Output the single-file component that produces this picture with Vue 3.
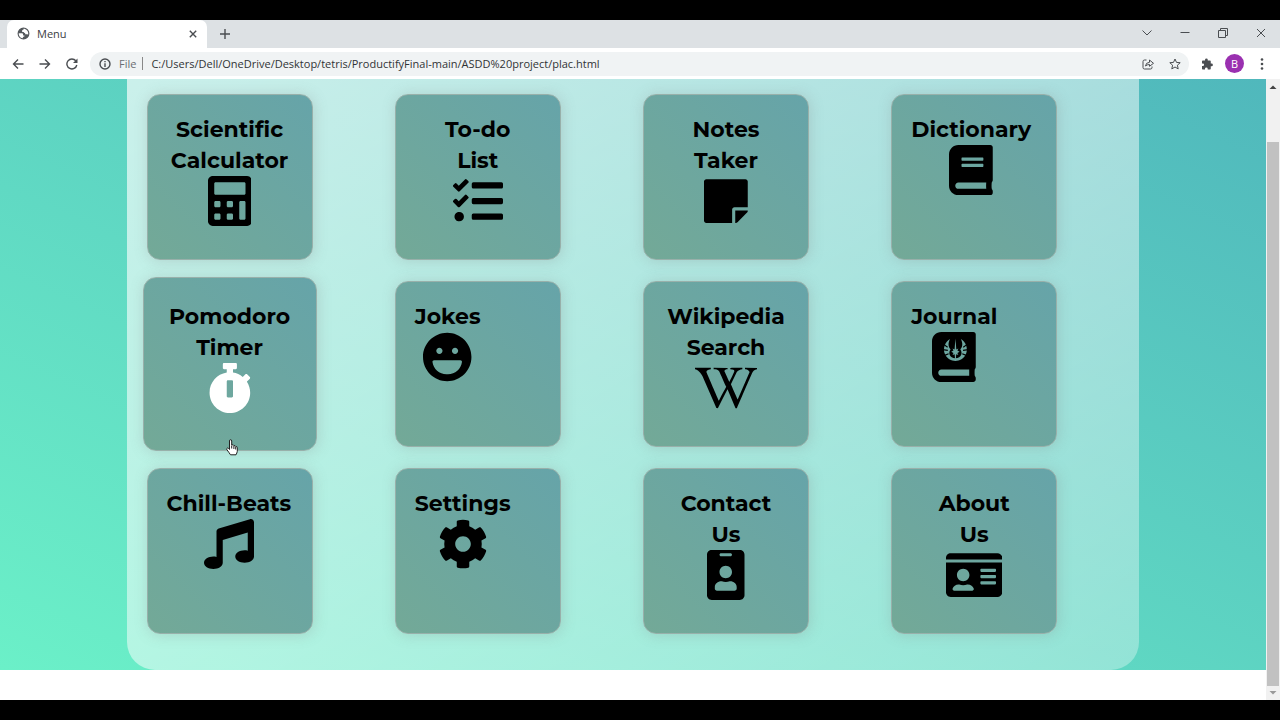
<template>
    <div class="screen">
        <header class="browser">
            <div class="tab-strip">
                <div class="tab">
                    <svg class="globe" viewBox="0 0 24 24"><path fill-rule="evenodd" d="M12 1a11 11 0 1 0 0 22 11 11 0 0 0 0-22zM10.500 20.800C5.500 20 2.800 16 3.200 11.500h5c2 0 3 1 3 2.500v1.500h2.500v2c-1.800 0-3 1-3.200 3.300zM20.500 14.500c-.800-.800-1.500-1-2.500-1h-3v-2.500c-1.500 0-2.500-.500-2.500-2H9.500V7c0-1.500 1-2 2.500-2V3.200c5 0 10 4.500 8.500 11.300z" /></svg>
                    <span class="tab-title">Menu</span>
                    <button class="icon-btn" aria-label="Close tab">
                        <svg class="tiny" viewBox="0 0 8 8"><path class="line thick" d="M.800.800l6.400 6.400M7.200.800L.800 7.200" /></svg>
                    </button>
                </div>
                <button class="icon-btn new-tab" aria-label="New tab">
                    <svg class="small" viewBox="0 0 10 10"><path class="line thick" d="M5 0v10M0 5h10" /></svg>
                </button>
                <div class="window-btns">
                    <button class="icon-btn" aria-label="Search tabs"><svg class="small" viewBox="0 0 10 10"><path class="line" d="M.5 2.500L5 7 9.500 2.500" /></svg></button>
                    <button class="icon-btn" aria-label="Minimize"><svg class="small" viewBox="0 0 10 10"><path class="line" d="M.5 4.500h9" /></svg></button>
                    <button class="icon-btn" aria-label="Restore"><svg class="small" viewBox="0 0 10 10"><path class="line" d="M.5 2.500h7v7h-7zM2.500 2.500v-2h7v7h-2" /></svg></button>
                    <button class="icon-btn" aria-label="Close"><svg class="small" viewBox="0 0 10 10"><path class="line" d="M1 1l8 8M9 1L1 9" /></svg></button>
                </div>
            </div>
            <div class="toolbar">
                <button class="icon-btn" aria-label="Back"><svg class="nav" viewBox="0 0 12 12"><path class="line thick" d="M11.500 6H1.500M6 1.500L1.500 6 6 10.500" /></svg></button>
                <button class="icon-btn" aria-label="Forward"><svg class="nav" viewBox="0 0 12 12"><path class="line thick" d="M.5 6h10M6 1.500L10.500 6 6 10.500" /></svg></button>
                <button class="icon-btn" aria-label="Reload"><svg class="nav" viewBox="0 0 12 12"><path class="line thick" d="M10.800 7A5 5 0 1 1 9.800 2.800" /><path d="M11.500.500v4.500H7z" /></svg></button>
                <div class="address">
                    <svg class="nav" viewBox="0 0 12 12"><circle class="line thick" cx="6" cy="6" r="5" /><path class="line thick" d="M6 5.300V9M6 3v1.300" /></svg>
                    <span class="scheme">File</span>
                    <input class="url" type="text" aria-label="Address" v-model="url">
                    <button class="icon-btn" aria-label="Share"><svg class="nav" viewBox="0 0 12 12"><path class="line" d="M4.500 2H2.500Q1 2 1 3.500v6Q1 11 2.500 11h6q1.500 0 1.500-1.500V8.500M3.500 8Q3.800 4.500 7.500 4.300V2L11.500 5.300 7.500 8.300V6.500Q5 6.500 3.500 8z" /></svg></button>
                    <button class="icon-btn" aria-label="Bookmark"><svg class="nav" viewBox="0 0 12 12"><path class="line" d="M6 1l1.500 3.400 3.700.300-2.800 2.500.800 3.700L6 9l-3.200 1.900.800-3.700L.800 4.700l3.700-.300z" /></svg></button>
                </div>
                <button class="icon-btn" aria-label="Extensions"><svg class="nav" viewBox="0 0 24 24"><path d="M21 11h-1.500V7c0-1.100-.900-2-2-2h-4V3.500a2.700 2.700 0 0 0-5.400 0V5H4c-1.100 0-2 .900-2 2v3.800h1.500a2.700 2.700 0 0 1 0 5.400H2V21c0 1.100.900 2 2 2h4v-1.500a2.700 2.700 0 0 1 5.400 0V23h4.100c1.100 0 2-.900 2-2v-4.500H21A2.700 2.700 0 0 0 21 11z" /></svg></button>
                <button class="avatar">B</button>
                <button class="icon-btn" aria-label="More"><svg class="nav" viewBox="0 0 12 12"><circle cx="6" cy="1.500" r="1.300" /><circle cx="6" cy="6" r="1.300" /><circle cx="6" cy="10.500" r="1.300" /></svg></button>
            </div>
        </header>
        <div class="viewport">
            <div class="page">
                <main>
                    <section class="glass">
                        <div class="card" v-for="item in menuList" :key="item.icon" :class="{ active: item.active }">
                            <a href="#" :class="{ wide: item.lines.length > 1 }" @click.prevent>
                                <h2><span v-for="line in item.lines" :key="line">{{ line }}</span></h2>
                                <svg class="icon" :viewBox="`0 0 ${item.width} 512`">
                                    <path :d="icons[item.icon]" />
                                    <g v-if="item.icon === 'journal'" class="emblem">
                                        <path d="M184 72C134 100 108 170 132 226c20 48 66 71 108 71s88-23 108-71c24-56-2-126-52-154 20 40 20 78-6 106 26 36 12 84-50 92-62-8-76-56-50-92-26-28-26-66-6-106z" />
                                        <path class="slit" d="M116 124l44 32M108 180l54 8M124 242l46-20M364 124l-44 32M372 180l-54 8M356 242l-46-20" />
                                        <path d="M240 66l9 112 21-8-10 20 23 12-23 12 10 22-22-8-4 50h-8l-4-50-22 8 10-22-23-12 23-12-10-20 21 8z" />
                                    </g>
                                </svg>
                            </a>
                            <svg v-if="item.active" class="pointer" viewBox="0 0 12 17"><path d="M3.500 10V2Q3.500.700 4.600.700T5.700 2v4Q7.500 5.200 7.900 6.700 9.300 6.200 9.700 7.500q1.600-.300 1.600 1.300v3.500Q11 14 10 15.800H4.500Q3 13.500.900 10.700.300 9.500 1.500 9q1 0 2 1.500zM5.700 6.500v3M7.900 7v3M9.700 8v2.500" /></svg>
                        </div>
                    </section>
                </main>
            </div>
            <div class="scrollbar">
                <svg viewBox="0 0 14 16"><path d="M3.500 10L7 6.500 10.500 10z" /></svg>
                <div class="track"><div class="thumb"></div></div>
                <svg class="muted" viewBox="0 0 14 14"><path d="M3.500 5L7 8.500 10.500 5z" /></svg>
            </div>
        </div>
    </div>
</template>
<script setup>
import { ref } from 'vue'
const url = ref('C:/Users/Dell/OneDrive/Desktop/tetris/ProductifyFinal-main/ASDD%20project/plac.html')
const menuList = ref([
    {lines: ["Scientific", "Calculator"], icon: "calculator", width: 448},
    {lines: ["To-do", "List"], icon: "tasks", width: 512},
    {lines: ["Notes", "Taker"], icon: "note", width: 448},
    {lines: ["Dictionary"], icon: "book", width: 448},
    {lines: ["Pomodoro", "Timer"], icon: "stopwatch", width: 448, active: true},
    {lines: ["Jokes"], icon: "laugh", width: 496},
    {lines: ["Wikipedia", "Search"], icon: "wikipedia", width: 640},
    {lines: ["Journal"], icon: "journal", width: 448},
    {lines: ["Chill-Beats"], icon: "music", width: 512},
    {lines: ["Settings"], icon: "cog", width: 512},
    {lines: ["Contact", "Us"], icon: "badge", width: 384},
    {lines: ["About", "Us"], icon: "idCard", width: 576},
])
const icons = {
    calculator: "M400 0H48C22.4 0 0 22.4 0 48v416c0 25.6 22.4 48 48 48h352c25.6 0 48-22.4 48-48V48c0-25.6-22.4-48-48-48zM128 435.2c0 6.4-6.4 12.8-12.8 12.8H76.8c-6.4 0-12.8-6.4-12.8-12.8v-38.4c0-6.4 6.4-12.8 12.8-12.8h38.4c6.4 0 12.8 6.4 12.8 12.8v38.4zm0-128c0 6.4-6.4 12.8-12.8 12.8H76.8c-6.4 0-12.8-6.4-12.8-12.8v-38.4c0-6.4 6.4-12.8 12.8-12.8h38.4c6.4 0 12.8 6.4 12.8 12.8v38.4zm128 128c0 6.4-6.4 12.8-12.8 12.8h-38.4c-6.4 0-12.8-6.4-12.8-12.8v-38.4c0-6.4 6.4-12.8 12.8-12.8h38.4c6.4 0 12.8 6.4 12.8 12.8v38.4zm0-128c0 6.4-6.4 12.8-12.8 12.8h-38.4c-6.4 0-12.8-6.4-12.8-12.8v-38.4c0-6.4 6.4-12.8 12.8-12.8h38.4c6.4 0 12.8 6.4 12.8 12.8v38.4zm128 128c0 6.4-6.4 12.8-12.8 12.8h-38.4c-6.4 0-12.8-6.4-12.8-12.8V268.8c0-6.4 6.4-12.8 12.8-12.8h38.4c6.4 0 12.8 6.4 12.8 12.8v166.400zm0-256c0 6.4-6.4 12.8-12.8 12.8H76.8c-6.4 0-12.8-6.4-12.8-12.8V76.8C64 70.4 70.4 64 76.8 64h294.4c6.4 0 12.8 6.4 12.8 12.8v102.400z",
    tasks: "M139.61 35.5a12 12 0 0 0-17 0L58.93 98.81l-22.7-22.12a12 12 0 0 0-17 0L3.53 92.41a12 12 0 0 0 0 17l47.59 47.4a12.78 12.78 0 0 0 17.61 0l15.59-15.62L156.52 69a12.09 12.09 0 0 0 .09-17zm0 159.19a12 12 0 0 0-17 0l-63.68 63.72-22.7-22.1a12 12 0 0 0-17 0L3.53 252a12 12 0 0 0 0 17L51 316.5a12.77 12.77 0 0 0 17.6 0l15.7-15.69 72.2-72.22a12 12 0 0 0 .09-16.9zM64 368c-26.49 0-48.59 21.5-48.59 48S37.53 464 64 464a48 48 0 0 0 0-96zm432 16H208a16 16 0 0 0-16 16v32a16 16 0 0 0 16 16h288a16 16 0 0 0 16-16v-32a16 16 0 0 0-16-16zm0-320H208a16 16 0 0 0-16 16v32a16 16 0 0 0 16 16h288a16 16 0 0 0 16-16V80a16 16 0 0 0-16-16zm0 160H208a16 16 0 0 0-16 16v32a16 16 0 0 0 16 16h288a16 16 0 0 0 16-16v-32a16 16 0 0 0-16-16z",
    note: "M312 320h136V56c0-13.3-10.7-24-24-24H24C10.7 32 0 42.7 0 56v400c0 13.3 10.7 24 24 24h264V344c0-13.2 10.8-24 24-24zm129 55l-98 98c-4.5 4.5-10.6 7-17 7h-6V352h128v6.1c0 6.3-2.5 12.4-7 16.9z",
    book: "M448 360V24c0-13.3-10.7-24-24-24H96C43 0 0 43 0 96v320c0 53 43 96 96 96h328c13.3 0 24-10.7 24-24v-16c0-7.5-3.5-14.3-8.9-18.7-4.2-15.4-4.2-59.3 0-74.7 5.4-4.3 8.9-11.1 8.9-18.6zM128 134c0-3.3 2.7-6 6-6h212c3.3 0 6 2.7 6 6v20c0 3.3-2.7 6-6 6H134c-3.3 0-6-2.7-6-6v-20zm0 64c0-3.3 2.7-6 6-6h212c3.3 0 6 2.7 6 6v20c0 3.3-2.7 6-6 6H134c-3.3 0-6-2.7-6-6v-20zm253.4 250H96c-17.7 0-32-14.3-32-32 0-17.6 14.4-32 32-32h285.400c-1.9 17.1-1.9 46.9 0 64z",
    stopwatch: "M432 304c0 114.9-93.1 208-208 208S16 418.9 16 304c0-104 76.3-190.2 176-205.5V64h-28c-6.6 0-12-5.4-12-12V12c0-6.6 5.4-12 12-12h120c6.6 0 12 5.4 12 12v40c0 6.6-5.4 12-12 12h-28v34.5c37.5 5.8 71.7 21.6 99.7 44.6l27.5-27.5c4.7-4.7 12.3-4.7 17 0l28.3 28.3c4.7 4.7 4.7 12.3 0 17l-29.4 29.4-.6.6C419.7 223.3 432 262.2 432 304zm-176 36V188.5c0-6.6-5.4-12-12-12h-40c-6.6 0-12 5.4-12 12V340c0 6.6 5.4 12 12 12h40c6.6 0 12-5.4 12-12z",
    laugh: "M248 8C111 8 0 119 0 256s111 248 248 248 248-111 248-248S385 8 248 8zm80 152c17.7 0 32 14.3 32 32s-14.3 32-32 32-32-14.3-32-32 14.3-32 32-32zm-160 0c17.7 0 32 14.3 32 32s-14.3 32-32 32-32-14.3-32-32 14.3-32 32-32zm88 272h-16c-73.4 0-134-55-142.9-126-1.2-9.5 6.3-18 15.9-18h270c9.6 0 17.1 8.4 15.9 18-8.9 71-69.5 126-142.900 126z",
    wikipedia: "M640 51.2l-.3 12.2c-28.1.8-45 15.8-55.8 40.3-25 57.8-103.3 240-155.3 358.6H415l-81.9-193.1c-32.5 63.6-68.3 130-99.2 193.1-.3.3-15 0-15-.3C172 352.3 122.8 243.4 75.8 133.4 64.4 106.7 26.4 63.4.2 63.7c0-3.1-.3-10-.3-14.2h161.9v13.9c-19.2 1.1-52.8 13.3-43.3 34.2 21.9 49.7 103.6 240.3 125.6 288.6 15-29.7 57.8-109.2 75.3-142.8-13.9-28.3-58.6-133.9-72.8-160-9.7-17.8-36.1-19.4-55.8-19.7V49.8l142.5.3v13.1c-19.4.6-38.1 7.8-29.4 26.1 18.9 40 30.6 68.1 48.1 104.7 5.6-10.8 34.7-69.4 48.1-100.8 8.9-20.6-3.9-28.6-38.6-29.4.3-3.6 0-10.3.3-13.6 44.4-.3 111.1-.3 123.1-.6v13.6c-22.5.8-45.8 12.8-58.1 31.7l-59.2 122.8c6.4 16.1 63.3 142.8 69.2 156.7L559.2 91.8c-8.6-23.1-36.4-28.1-47.2-28.3V49.6l127.8 1.1.2.5z",
    journal: "M448 358.4V25.6c0-16-9.6-25.6-25.6-25.6H96C41.6 0 0 41.6 0 96v320c0 54.4 41.6 96 96 96h326.4c12.8 0 25.6-9.6 25.6-25.6v-16c0-6.4-3.2-12.8-9.6-19.2-3.2-16-3.2-60.8 0-73.6 6.4-3.2 9.6-9.6 9.6-19.2zM381 448H96c-18 0-32-14-32-32s14-32 32-32h285z",
    music: "M511.99 32.01c0-21.71-21.1-37.01-41.6-30.51L150.4 96c-13.3 4.2-22.4 16.5-22.4 30.5v261.42c-10.05-2.38-20.72-3.92-32-3.92-53.02 0-96 28.65-96 64s42.98 64 96 64 96-28.65 96-64V214.31l256-75.02v184.63c-10.05-2.38-20.72-3.92-32-3.92-53.02 0-96 28.65-96 64s42.98 64 96 64 96-28.65 96-64l-.01-351.99z",
    cog: "M487.4 315.7l-42.6-24.6c4.3-23.2 4.3-47 0-70.2l42.6-24.6c4.9-2.8 7.1-8.6 5.5-14-11.1-35.6-30-67.8-54.7-94.6-3.8-4.1-10-5.1-14.8-2.3L380.8 110c-17.9-15.4-38.5-27.3-60.8-35.1V25.8c0-5.6-3.9-10.5-9.4-11.7-36.7-8.2-74.3-7.8-109.2 0-5.5 1.2-9.4 6.1-9.4 11.7V75c-22.2 7.9-42.8 19.8-60.8 35.1L88.7 85.5c-4.9-2.8-11-1.9-14.8 2.3-24.7 26.7-43.6 58.9-54.7 94.6-1.7 5.4.6 11.2 5.5 14L67.3 221c-4.3 23.2-4.3 47 0 70.2l-42.6 24.6c-4.9 2.8-7.1 8.6-5.5 14 11.1 35.6 30 67.8 54.7 94.6 3.8 4.1 10 5.1 14.8 2.3l42.6-24.6c17.9 15.4 38.5 27.3 60.8 35.1v49.2c0 5.6 3.9 10.5 9.4 11.7 36.7 8.2 74.3 7.8 109.2 0 5.5-1.2 9.4-6.1 9.4-11.7v-49.2c22.2-7.9 42.8-19.8 60.8-35.1l42.6 24.6c4.9 2.8 11 1.9 14.8-2.3 24.7-26.7 43.6-58.9 54.7-94.6 1.5-5.5-.7-11.3-5.6-14.1zM256 336c-44.1 0-80-35.9-80-80s35.9-80 80-80 80 35.9 80 80-35.9 80-80 80z",
    badge: "M336 0H48C21.5 0 0 21.5 0 48v416c0 26.5 21.5 48 48 48h288c26.5 0 48-21.5 48-48V48c0-26.5-21.5-48-48-48zM144 32h96c8.8 0 16 7.2 16 16s-7.2 16-16 16h-96c-8.8 0-16-7.2-16-16s7.2-16 16-16zm48 128c35.3 0 64 28.7 64 64s-28.7 64-64 64-64-28.7-64-64 28.7-64 64-64zm112 236.8c0 10.6-10 19.2-22.4 19.2H102.4C90 416 80 407.4 80 396.8v-19.2c0-31.8 30.1-57.6 67.2-57.6h5c12.3 5.1 25.7 8 39.8 8s27.6-2.9 39.8-8h5c37.1 0 67.2 25.8 67.2 57.6v19.2z",
    idCard: "M528 32H48C21.5 32 0 53.5 0 80v16h576V80c0-26.5-21.5-48-48-48zM0 432c0 26.5 21.5 48 48 48h480c26.5 0 48-21.5 48-48V128H0v304zm352-232c0-4.4 3.6-8 8-8h144c4.4 0 8 3.6 8 8v16c0 4.4-3.6 8-8 8H360c-4.4 0-8-3.6-8-8v-16zm0 64c0-4.4 3.6-8 8-8h144c4.4 0 8 3.6 8 8v16c0 4.4-3.6 8-8 8H360c-4.4 0-8-3.6-8-8v-16zm0 64c0-4.4 3.6-8 8-8h144c4.4 0 8 3.6 8 8v16c0 4.4-3.6 8-8 8H360c-4.4 0-8-3.6-8-8v-16zM176 192c35.3 0 64 28.7 64 64s-28.7 64-64 64-64-28.7-64-64 28.7-64 64-64zM67.1 396.2C75.5 370.5 99.6 352 128 352h8.200c12.3 5.1 25.7 8 39.8 8s27.6-2.9 39.8-8h8.200c28.4 0 52.5 18.5 60.9 44.2 3.2 9.9-5.2 19.8-15.6 19.8H82.7c-10.4 0-18.8-10-15.6-19.8z",
}
</script>
<style>
body {
    margin: 0;
    background: #000;
}
</style>
<style scoped>
* {
    box-sizing: border-box;
}
.screen {
    display: flex;
    flex-direction: column;
    min-height: 100vh;
    padding: 20px 0;
    background: #000;
    font-family: "Open Sans", "Noto Sans", sans-serif;
    font-size: 11px;
    color: #3c4043;
}
button {
    padding: 0;
    border: 0;
    background: none;
    font: inherit;
}
svg {
    display: block;
    fill: currentColor;
}
.icon-btn {
    display: flex;
    align-items: center;
    justify-content: center;
    color: #4a4d51;
}
.tiny {
    width: 8px;
    height: 8px;
}
.small {
    width: 10px;
    height: 10px;
}
.nav {
    width: 12px;
    height: 12px;
}
.line {
    fill: none;
    stroke: currentColor;
    stroke-width: 1;
}
.line.thick {
    stroke-width: 1.4;
}
.tab-strip {
    display: flex;
    align-items: center;
    height: 28px;
    padding: 0 14px 0 7px;
    background: #dde1e4;

    .tab {
        display: flex;
        align-items: center;
        gap: 7px;
        width: 200px;
        height: 28px;
        padding: 0 10px 1px 10px;
        border-radius: 7px 7px 0 0;
        background: #fff;
    }
    .globe {
        width: 13px;
        height: 13px;
        color: #54585c;
    }
    .tab-title {
        flex: 1;
    }
    .new-tab {
        margin-left: 13px;
    }
    .window-btns {
        display: flex;
        gap: 28px;
        margin-left: auto;
        padding-bottom: 2px;
    }
}
.toolbar {
    display: flex;
    align-items: center;
    gap: 15px;
    height: 31px;
    padding: 0 12px;
    background: #fff;

    .address {
        display: flex;
        flex: 1;
        align-items: center;
        gap: 8px;
        height: 24px;
        margin: 0 -3px;
        padding: 0 8px 0 9px;
        border-radius: 12px;
        background: #f0f3f4;
        color: #4a4d51;
    }
    .address .icon-btn {
        margin-left: 7px;
    }
    .scheme {
        padding-right: 6px;
        border-right: 1px solid #888;
        line-height: 13px;
        color: #6a6e72;
    }
    .url {
        flex: 1;
        min-width: 0;
        padding: 0;
        border: 0;
        outline: 0;
        background: none;
        font: inherit;
        color: #303336;
    }
    .avatar {
        width: 19px;
        height: 19px;
        margin: 0 -3px;
        border-radius: 50%;
        background: #9a30b0;
        color: #fff;
    }
}
.viewport {
    display: flex;
    flex: 1;
    background: #fff;
}
.page {
    flex: 1;
    min-width: 0;
}
main {
    padding: 0 10%;
    background: linear-gradient(to right top, #6bf0c8, #50b8bc);
}
.glass {
    display: grid;
    grid-template-columns: repeat(4, 1fr);
    gap: 21px 0;
    padding: 15px 0 36px 20px;
    border-radius: 0 0 28px 28px;
    background: linear-gradient(to right bottom, rgba(255, 255, 255, 0.68), rgba(255, 255, 255, 0.32));
}
.card {
    position: relative;
    width: 166px;
    height: 166px;
    padding: 19px;
    border: 1px solid #98b0aa;
    border-radius: 13px;
    background: linear-gradient(to right top, #73a997, #66a4a9);
    box-shadow: 1px 1px 14px rgba(122, 122, 122, 0.25);

    a {
        display: inline-block;
        color: #000;
        text-align: center;
        text-decoration: none;
    }
    a.wide {
        width: 100%;
    }
    h2 {
        margin: 0;
        font-family: Montserrat, Inter, sans-serif;
        font-size: 22px;
        font-weight: 700;
        font-variant-ligatures: none;
        line-height: 31px;
        white-space: nowrap;
    }
    h2 span {
        display: block;
    }
    .icon {
        height: 50px;
        margin: 0 auto;
    }
    .emblem {
        fill: #6ca7a1;
    }
    .slit {
        fill: none;
        stroke: #000;
        stroke-width: 12;
    }
    &.active {
        width: 174px;
        height: 174px;
        margin: -4px;
        padding: 23px;
    }
    &.active .icon {
        color: #fff;
    }
    .pointer {
        position: absolute;
        left: 82px;
        bottom: -6px;
        width: 12px;
        height: 17px;
        fill: #fff;
        stroke: #222;
        stroke-width: 1;
    }
}
.scrollbar {
    display: flex;
    flex-direction: column;
    width: 14px;
    background: #f1f1f1;
    color: #444;

    .track {
        display: flex;
        flex: 1;
        flex-direction: column;
        justify-content: flex-end;
        padding: 0 1px;
    }
    .thumb {
        height: 92%;
        background: #c1c1c1;
    }
    .muted {
        color: #999;
    }
}
</style>
